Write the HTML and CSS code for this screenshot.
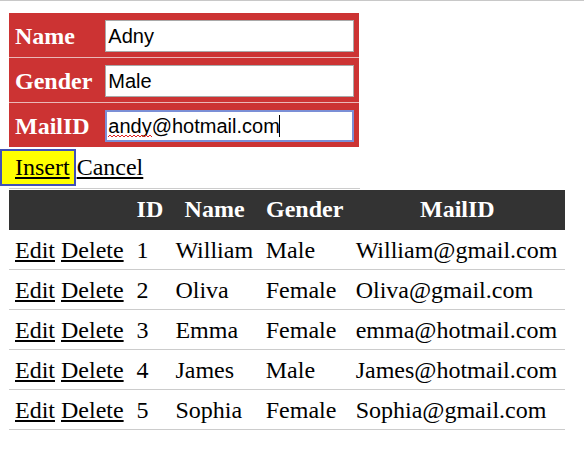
FILE: index.html
```html
<!DOCTYPE html>
<html>
<head>
<meta charset="utf-8">
<link rel="stylesheet" href="styles.css">
</head>
<body>
<div class="topline"></div>
<table class="form">
  <tr>
    <td class="label">Name</td>
    <td class="field"><input class="inp" type="text" value="Adny"></td>
  </tr>
  <tr>
    <td class="label">Gender</td>
    <td class="field"><input class="inp" type="text" value="Male"></td>
  </tr>
  <tr>
    <td class="label">MailID</td>
    <td class="field">
      <div class="wrap">
        <input class="inp focused" type="text" value="andy@hotmail.com">
        <svg class="squiggle" width="44" height="4" viewBox="0 0 44 4"><path d="M0 3 L2 1 L4 3 L6 1 L8 3 L10 1 L12 3 L14 1 L16 3 L18 1 L20 3 L22 1 L24 3 L26 1 L28 3 L30 1 L32 3 L34 1 L36 3 L38 1 L40 3 L42 1 L44 3" fill="none" stroke="#e02020" stroke-width="1"/></svg>
        <span class="caret"></span>
      </div>
    </td>
  </tr>
</table>
<div class="actions">
  <a href="#" class="btn insert">Insert</a><a href="#" class="btn cancel">Cancel</a>
</div>
<div class="divider"></div>
<table class="grid">
  <thead>
    <tr><th></th><th>ID</th><th>Name</th><th>Gender</th><th>MailID</th></tr>
  </thead>
  <tbody>
    <tr><td class="ops"><a href="#">Edit</a> <a href="#">Delete</a></td><td>1</td><td>William</td><td>Male</td><td>William@gmail.com</td></tr>
    <tr><td class="ops"><a href="#">Edit</a> <a href="#">Delete</a></td><td>2</td><td>Oliva</td><td>Female</td><td>Oliva@gmail.com</td></tr>
    <tr><td class="ops"><a href="#">Edit</a> <a href="#">Delete</a></td><td>3</td><td>Emma</td><td>Female</td><td>emma@hotmail.com</td></tr>
    <tr><td class="ops"><a href="#">Edit</a> <a href="#">Delete</a></td><td>4</td><td>James</td><td>Male</td><td>James@hotmail.com</td></tr>
    <tr><td class="ops"><a href="#">Edit</a> <a href="#">Delete</a></td><td>5</td><td>Sophia</td><td>Female</td><td>Sophia@gmail.com</td></tr>
  </tbody>
</table>
</body>
</html>
```
FILE: styles.css
```css
html, body {
  margin: 0;
  padding: 0;
  background: #ffffff;
  font-family: "Liberation Serif", "Times New Roman", serif;
  font-size: 24px;
  color: #000;
}

.topline {
  height: 1px;
  background: #c8c8c8;
}

.form {
  margin: 12px 0 0 9px;
  border-collapse: collapse;
  background: #cc3333;
}

.form tr + tr td {
  border-top: 1px solid #eab8b8;
}

.form td {
  padding: 7px 5px 5px 5px;
  vertical-align: middle;
}

.form td.label {
  color: #ffffff;
  font-weight: bold;
  padding-left: 6px;
  padding-right: 8px;
  line-height: 27px;
  white-space: nowrap;
}

.wrap {
  position: relative;
}

.inp {
  display: block;
  box-sizing: border-box;
  width: 249px;
  height: 32px;
  margin: 0;
  padding: 1px 2px;
  border: 1px solid #a9a9a9;
  font-family: "Liberation Sans", Arial, sans-serif;
  font-size: 20px;
  color: #000;
  background: #fff;
  outline: none;
}

.inp.focused {
  border: 2px solid #7b8fd6;
  padding: 0 1px;
}

.squiggle {
  position: absolute;
  left: 3px;
  top: 24px;
}

.caret {
  position: absolute;
  left: 174px;
  top: 5px;
  width: 1px;
  height: 22px;
  background: #000;
}

.actions {
  display: flex;
  align-items: baseline;
  margin-top: 2px;
}

.btn {
  color: #000;
  text-decoration: underline;
  text-decoration-thickness: 2px;
  text-underline-offset: 2px;
  line-height: 27px;
}

.insert {
  background: #ffff00;
  border: 2px solid #4151b8;
  padding: 3px 4px 3px 13px;
}

.cancel {
  margin-left: 1px;
}

.divider {
  width: 351px;
  margin: 2px 0 0 9px;
  border-top: 1px solid #cccccc;
}

.grid {
  margin: 1px 0 0 9px;
  width: 556px;
  border-collapse: collapse;
}

.grid th {
  background: #333333;
  color: #ffffff;
  font-weight: bold;
  text-align: center;
  padding: 6px 6px 7px 6px;
  line-height: 27px;
  white-space: nowrap;
}

.grid td {
  padding: 7px 6px 5px 6px;
  line-height: 27px;
  border-bottom: 1px solid #cccccc;
  text-align: left;
  white-space: nowrap;
}

.grid a {
  color: #000;
  text-decoration: underline;
  text-decoration-thickness: 2px;
  text-underline-offset: 2px;
}
```
